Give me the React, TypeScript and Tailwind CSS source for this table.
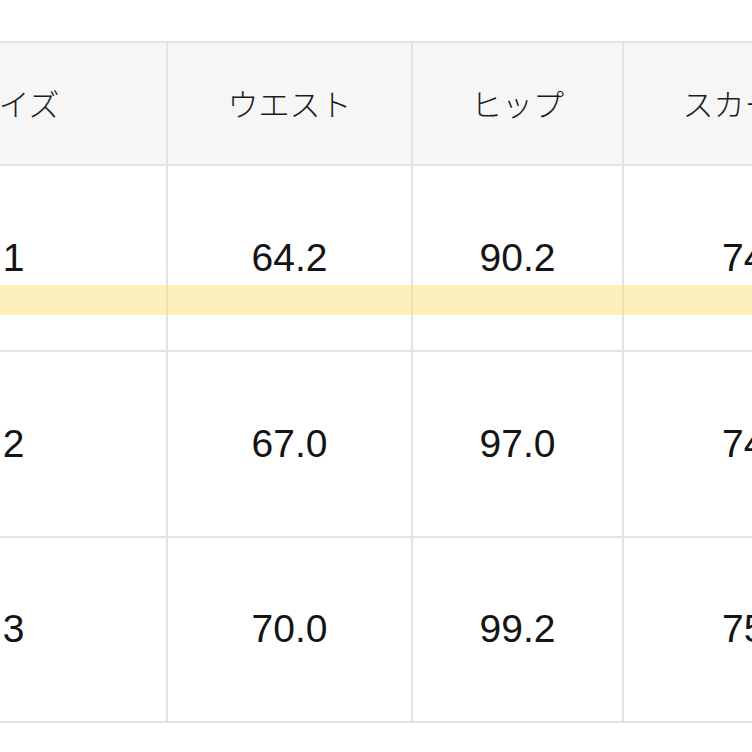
const headers = ['サイズ', 'ウエスト', 'ヒップ', 'スカート丈'];

const rows = [
  ['1', '64.2', '90.2', '74.0'],
  ['2', '67.0', '97.0', '74.5'],
  ['3', '70.0', '99.2', '75.0'],
];

export default function App() {
  return (
    <div className="relative h-[752px] w-[752px] overflow-hidden bg-white pt-[41px]">
      {/* size table, left column is cut off by the crop */}
      <div className="ml-[-139px] grid w-[1100px] grid-cols-[305px_243px_209px_272px_1fr] grid-rows-[121px_184px_184px_183px] gap-[2px] bg-[#e2e2e7] py-[2px]">
        {headers.map((h) => (
          <div
            key={h}
            className="flex items-center justify-center bg-[#f6f6f6] font-['Noto_Sans_CJK_JP',sans-serif] text-[31px] font-light text-[#1c1c1c]"
          >
            {h}
          </div>
        ))}
        <div className="bg-[#f6f6f6]" />
        {rows.map((r) => (
          <>
            {r.map((v, i) => (
              <div
                key={r[0] + i}
                className="flex items-center justify-center bg-white font-['Liberation_Sans',Arial,sans-serif] text-[39px] text-[#141414]"
              >
                {v}
              </div>
            ))}
            <div className="bg-white" />
          </>
        ))}
      </div>

      {/* marker highlight across row 1 */}
      <div className="absolute left-0 top-[285px] h-[30px] w-full bg-[#fce27a]/50" />
    </div>
  );
}
